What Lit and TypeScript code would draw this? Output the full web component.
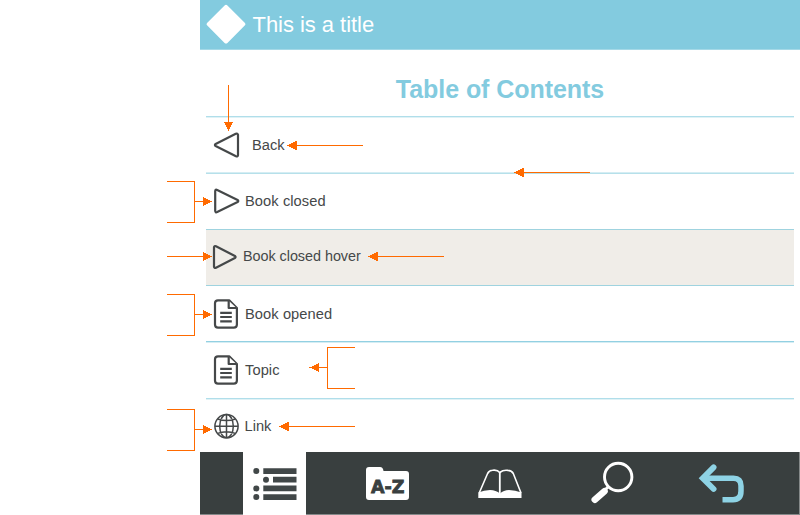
import { LitElement, html, css, svg } from "lit";
import { customElement } from "lit/decorators.js";
import { classMap } from "lit/directives/class-map.js";

const back = html`<svg width="28" height="28" viewBox="0 0 28 28"><path d="M26 3.8V24.2Q25.8 26 24 25.3L3.6 15Q2.2 14 3.6 13L23.8 2.8Q25.6 2 26 3.8Z"/></svg>`;
const closed = html`<svg width="28" height="28" viewBox="0 0 28 28"><path d="M3.2 4V24Q3.4 25.9 5.2 25.1L25.6 15Q27 14 25.6 13L5.2 2.9Q3.4 2.1 3.2 4Z"/></svg>`;
const closedHover = html`<svg width="28" height="28" viewBox="0 0 28 28"><path d="M4 4.3V23.7Q4.2 25.5 6 24.7L24.9 15Q26.3 14 24.9 13L6 3.3Q4.2 2.5 4 4.3Z"/></svg>`;
const page = html`<svg width="28" height="32" viewBox="0 0 28 32"><path d="M6 2.3H17.2L24.9 10V26.6Q24.9 29.7 21.8 29.7H6Q3 29.7 3 26.6V5.3Q3 2.3 6 2.3Z"/><path d="M16.7 2.8V10H24.5M8.2 14.8H19.8M8.2 19H19.8M8.2 23.3H19.8"/></svg>`;
const globe = html`<svg width="28" height="28" viewBox="0 0 28 28"><g class="thin"><circle cx="14.5" cy="14.2" r="11.6"/><ellipse cx="14.5" cy="14.2" rx="6.8" ry="11.6"/><path d="M14.5 2.6V25.8M2.9 14.2H26.1M5.6 7Q14.5 10.2 23.4 7M5.6 21.4Q14.5 18.2 23.4 21.4"/></g></svg>`;

const rows = [
  { label: "Back", icon: back, kind: "back" },
  { label: "Book closed", icon: closed, kind: "book" },
  { label: "Book closed hover", icon: closedHover, kind: "hover" },
  { label: "Book opened", icon: page, kind: "opened" },
  { label: "Topic", icon: page, kind: "topic" },
  { label: "Link", icon: globe, kind: "link" },
];

/* Callout strokes and the arrow tips with their direction. */
const strokes = [
  "M228.5 85V122", "M297 145.5H363", "M523 172.5H590",
  "M167 181.5H194.5V222.5H167M194.5 201.5H204",
  "M167 256.5H204", "M377 256.5H444",
  "M167 294.5H194.5V335.5H167M194.5 314.5H204",
  "M355 347.5H327.5V388.5H355M327.5 367.5H318",
  "M167 409.5H194.5V450.5H167M194.5 429.5H204", "M288 426.5H355",
];
const tips: [number, number, number][] = [
  [228.5, 131, 90], [287, 145.5, 180], [514, 172.5, 180], [212, 201.5, 0],
  [212, 256.5, 0], [368, 256.5, 180], [212, 314.5, 0], [309.5, 367.5, 180],
  [212, 429.5, 0], [279, 426.5, 180],
];

@customElement("app-root")
export class AppRoot extends LitElement {
  static styles = css`
    :host { display: block; position: relative; width: 800px; height: 515px; overflow: hidden; background: #fff; font-family: "Liberation Sans", Arial, sans-serif; color: #454849; }
    svg { display: block; flex: none; }
    .panel { box-sizing: border-box; width: 600px; height: 515px; margin-left: 200px; display: flex; flex-direction: column; }
    header { box-sizing: border-box; height: 50px; flex: none; display: flex; align-items: center; background: #83cbdf; border-bottom: 1px solid #a5d9e7; color: #fff; font-size: 22px; padding-left: 6px; }
    .title { margin-left: 6.5px; padding-top: 1px; letter-spacing: -0.04px; }
    h1 { margin: 0; height: 66px; flex: none; line-height: 79px; text-align: center; font-size: 25px; font-weight: bold; color: #83cbdf; letter-spacing: -0.05px; }
    ul { list-style: none; margin: 0 6px; padding: 0; height: 336px; flex: none; display: grid; grid-template-rows: 56px 57px 56px 56px 57px 54px; }
    li { box-sizing: border-box; display: flex; align-items: center; border-top: 1px solid #b0deea; box-shadow: inset 0 1px #e0f2f6; padding-left: 6px; font-size: 14.67px; }
    li svg { fill: #fff; stroke: #454849; stroke-width: 2.2; stroke-linejoin: round; }
    .label { margin-left: 5px; }
    .thin { stroke-width: 1.5; }
    .back .label { margin-left: 12px; }
    .book { border-color: #d5edf3; box-shadow: inset 0 1px #b6e0ea; }
    .book .label, .opened .label, .topic .label { letter-spacing: 0.08px; }
    .hover { background: #f0ede8; font-size: 14.4px; padding-left: 5px; border-color: #9fd3df; box-shadow: none; }
    .hover svg { fill: none; margin-top: -1px; margin-left: -0.7px; }
    .hover .label { margin-left: 4.7px; margin-top: -3px; letter-spacing: -0.04px; }
    .opened { border-color: #9fd3df; box-shadow: none; }
    .topic { border-color: #92d0e2; box-shadow: inset 0 1px #d5edf3; }
    .link .label { margin-left: 4.5px; }
    footer { box-sizing: border-box; height: 63px; flex: none; display: flex; background: #393f3f; border-bottom: 1px solid #858989; border-right: 1px solid #858989; }
    .tab { display: flex; align-items: center; justify-content: center; width: 112px; }
    .tab.active { width: 63px; height: 63px; margin: 0 25px 0 43px; background: #fff; }
    .az { font: bold 17px "DejaVu Sans", sans-serif; fill: #393f3f; stroke: #393f3f; stroke-width: 0.8; }
    .callouts { position: absolute; inset: 0; pointer-events: none; }
    .callouts path { fill: none; stroke: #ff6a00; shape-rendering: crispEdges; }
    .callouts polygon { fill: #ff6a00; shape-rendering: crispEdges; }
  `;

  render() {
    return html`
      <div class="panel">
        <header>
          <svg width="40" height="42" viewBox="0 0 40 42"><path d="M20 2.9L37.3 20.2L20 37.5L2.7 20.2Z" fill="#fff" stroke="#fff" stroke-width="4" stroke-linejoin="round"/></svg>
          <span class="title">This is a title</span>
        </header>
        <h1>Table of Contents</h1>
        <ul>
          ${rows.map((r) => html`<li class=${classMap({ [r.kind]: true })}>${r.icon}<span class="label">${r.label}</span></li>`)}
        </ul>
        <footer>
          <div class="tab active">
            <svg width="63" height="63" viewBox="0 0 63 63" fill="#414748"><circle cx="13.3" cy="19" r="3"/><circle cx="23" cy="27.7" r="3"/><circle cx="13.3" cy="36.4" r="3"/><circle cx="13.3" cy="45" r="3"/><path d="M20.3 16.2H53.5V22H20.3ZM30 24.8H53.5V30.5H30ZM20.3 33.5H53.5V39.3H20.3ZM20.3 42.2H53.5V48H20.3Z"/></svg>
          </div>
          <div class="tab">
            <svg width="112" height="63" viewBox="0 0 112 63"><path d="M38 15H49Q52 15 52.5 19H75Q78 19 78 22V45Q78 48 75 48H38Q35 48 35 45V18Q35 15 38 15Z" fill="#fff"/><text class="az" x="40" y="41" textLength="33.5" lengthAdjust="spacingAndGlyphs">A-Z</text></svg>
          </div>
          <div class="tab">
            <svg width="112" height="63" viewBox="0 0 112 63" fill="none" stroke="#fff"><path d="M36.2 41L44.6 21.5Q46.2 18.5 49.5 18.3Q54.5 17.6 56.7 20.5Q60.5 17.6 65 18.4Q68.7 18.6 70.3 21.5L78 41" stroke-width="1.6"/><path d="M56.8 20V42" stroke-width="1.8"/><path d="M35.3 46V40.5Q41 38 47 38Q53 38.3 57 41.5Q60.5 38.2 66 38Q72 38 78.5 40.5V46Z" fill="#fff" stroke="none"/></svg>
          </div>
          <div class="tab">
            <svg width="112" height="63" viewBox="0 0 112 63" fill="none" stroke="#fff"><circle cx="63.2" cy="25" r="13.7" stroke-width="2.9"/><path d="M53.5 34.5L49.5 38.5" stroke-width="3"/><path d="M49.5 39.2L39.8 47.7" stroke-width="6.6" stroke-linecap="round"/></svg>
          </div>
          <div class="tab">
            <svg width="112" height="63" viewBox="0 0 112 63" fill="none" stroke="#8ed3e5"><path d="M38 26.2H66.5Q74 26.2 74 34V39Q74 47.7 66 47.7H55.5" stroke-width="5.5"/><path d="M46.6 15.4L35.8 26.2L46.6 37" stroke-width="5.8" stroke-linecap="round"/></svg>
          </div>
        </footer>
      </div>
      <svg class="callouts" width="800" height="515">
        ${strokes.map((d) => svg`<path d=${d}></path>`)}
        ${tips.map(([x, y, a]) => svg`<polygon points="0,0 -9.5,-4.5 -9.5,4.5" transform=${`translate(${x} ${y}) rotate(${a})`}></polygon>`)}
      </svg>
    `;
  }
}
